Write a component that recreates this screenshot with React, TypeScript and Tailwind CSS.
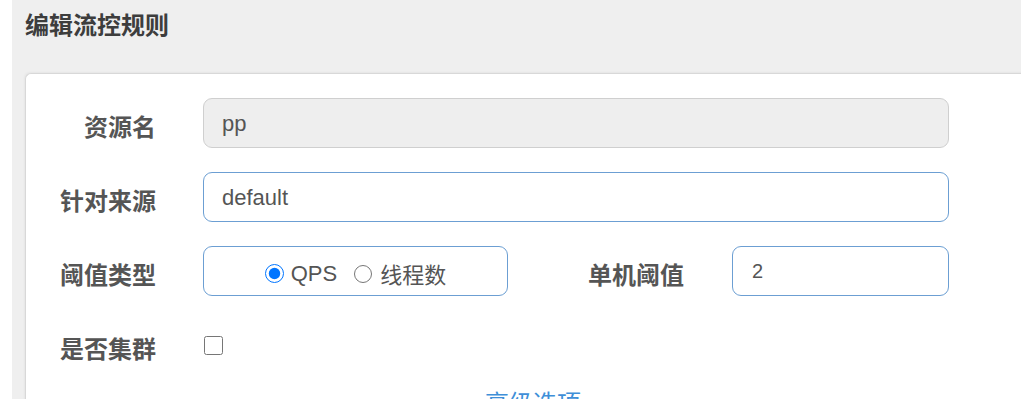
export default function App() {
  const cjk = { fontFamily: '"Noto Sans CJK SC", "Noto Sans", sans-serif' };
  const latin = { fontFamily: '"Liberation Sans", Arial, "Noto Sans CJK SC", sans-serif' };

  return (
    <div className="flex h-[399px] w-full overflow-hidden bg-[#efefef]" style={cjk}>
      <div className="w-[12px] shrink-0 bg-white" />
      <div className="flex flex-1 flex-col">
        <div className="h-[73px] shrink-0 pl-[13px] pt-[9px]">
          <h1 className="text-[24px] font-bold leading-[30px] text-[#3d3d3d]">编辑流控规则</h1>
        </div>

        <div className="ml-[13px] flex-1 rounded-tl-[6px] border-l border-t border-[#d8d8d8] bg-white pt-[24px] shadow-[-1px_-1px_2px_rgba(0,0,0,0.04)]">
          <div className="flex flex-col gap-[24px]">
            <div className="flex h-[50px] items-center">
              <label className="mt-[6px] w-[130px] text-right text-[24px] font-bold text-[#555]">资源名</label>
              <div
                className="ml-[47px] flex h-[50px] w-[746px] items-center rounded-[9px] border border-[#cfcfcf] bg-[#eeeeee] pl-[18px] text-[22px] text-[#555]"
                style={latin}
              >
                pp
              </div>
            </div>

            <div className="flex h-[50px] items-center">
              <label className="mt-[6px] w-[130px] text-right text-[24px] font-bold text-[#555]">针对来源</label>
              <div
                className="ml-[47px] flex h-[50px] w-[746px] items-center rounded-[9px] border border-[#6c9fd3] bg-white pl-[18px] text-[22px] text-[#555]"
                style={latin}
              >
                default
              </div>
            </div>

            <div className="flex h-[50px] items-center">
              <label className="mt-[6px] w-[130px] text-right text-[24px] font-bold text-[#555]">阈值类型</label>
              <div className="ml-[47px] flex h-[50px] w-[305px] items-center justify-center rounded-[9px] border border-[#6c9fd3] bg-white pt-[5px] text-[22px] text-[#555]">
                <label className="flex items-center">
                  <input type="radio" name="grade" defaultChecked className="m-0 h-[19px] w-[19px]" />
                  <span className="ml-[7px]" style={latin}>QPS</span>
                </label>
                <label className="ml-[17px] flex items-center">
                  <input type="radio" name="grade" className="m-0 h-[18px] w-[18px]" />
                  <span className="ml-[8px] text-[22px]">线程数</span>
                </label>
              </div>
              <label className="mt-[6px] w-[176px] text-right text-[24px] font-bold text-[#555]">单机阈值</label>
              <div
                className="ml-[48px] flex h-[50px] w-[217px] items-start rounded-[9px] border border-[#6c9fd3] bg-white pl-[19px] pt-[9px] text-[20px] text-[#555]"
                style={latin}
              >
                2
              </div>
            </div>

            <div className="flex h-[50px] items-center">
              <label className="mt-[6px] w-[130px] text-right text-[24px] font-bold text-[#555]">是否集群</label>
              <input type="checkbox" className="m-0 ml-[48px] h-[19px] w-[19px]" />
            </div>
          </div>

          <div className="mt-[16px] w-[1014px] text-center text-[24px] leading-[32px] text-[#3f8fd8]">高级选项</div>
        </div>
      </div>
    </div>
  );
}
